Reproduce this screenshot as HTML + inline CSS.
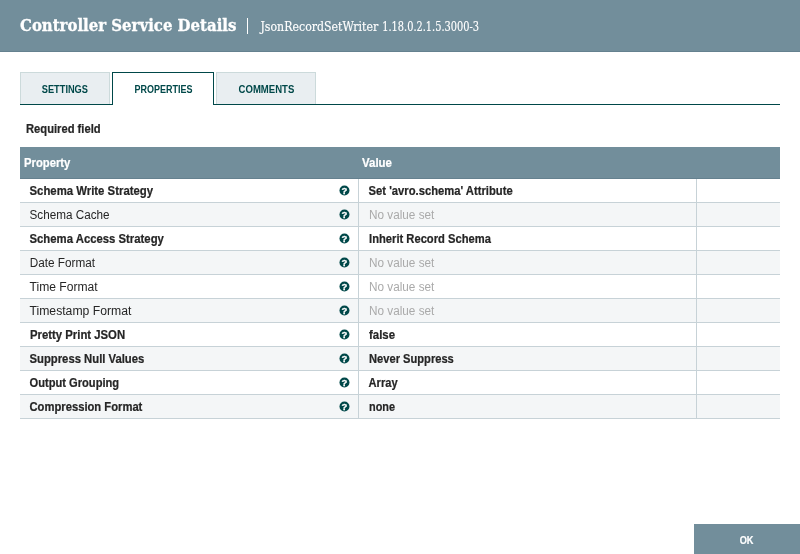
<!DOCTYPE html>
<html lang="en"><head><meta charset="utf-8"><title>Controller Service Details</title>
<style>
html,body{margin:0;padding:0;background:#fff}
body{width:800px;height:554px;overflow:hidden;position:relative;font-family:"Liberation Sans", Arial, sans-serif;color:#262626}
.dialog{position:absolute;left:0;top:0;width:800px;height:554px;overflow:hidden;background:#fff;will-change:transform}
.t{position:absolute;left:0;top:0;white-space:nowrap;line-height:20px;height:20px;transform-origin:0 0;font-weight:normal;font-family:"Liberation Sans", Arial, sans-serif}
.t.b{font-weight:bold;-webkit-text-stroke:.22px}
.t.tl{-webkit-text-stroke:0}
.t.sl{font-family:"DejaVu Serif", "Liberation Serif", serif;-webkit-text-stroke:.15px #fff}
.t.sl.b{-webkit-text-stroke:.35px #fff}
.t.unset{color:#aaaaaa}
.dialog-header{position:absolute;left:0;top:0;width:800px;height:52px;background:#728e9b;box-sizing:border-box;border-bottom:1px solid #65818f;color:#fff}
.sep{position:absolute;left:247px;top:18px;width:1px;height:16px;background:#fff}
.tab{position:absolute;top:72px;height:32px;box-sizing:border-box;border:1px solid #ccdadb;border-bottom:none;background:#e9eef1;color:#004849}
.tab.selected{background:#fff;border-color:#004849;height:33px}
.tabline{position:absolute;top:104px;height:1px;background:#004849}
.grid-header{position:absolute;left:20px;top:147px;width:760px;height:32px;background:#728e9b;box-sizing:border-box;border-bottom:1px solid #65818f;color:#fff}
.row{position:absolute;left:20px;width:760px;height:24px;box-sizing:border-box;border-bottom:1px solid #c7d2d7;background:#fff}
.row.odd{background:#f4f6f7}
.cell{position:absolute;top:0;height:23px;box-sizing:border-box;border-right:1px solid #c7d2d7}
.c1{left:0;width:339px}.c2{left:339px;width:338px}
.help{position:absolute;left:318px;top:4px;width:14px;height:14px;overflow:visible}
.help text{font:bold 9.5px "Liberation Sans", Arial, sans-serif;fill:#fff;stroke:#fff;stroke-width:.3px}
.button{position:absolute;left:694px;top:524px;width:106px;height:30px;background:#728e9b;color:#fff}
</style></head><body><div class="dialog">
<div class="dialog-header"><span class="t sl b" style="font-size:17.5px;transform:translate(20.00px,15.00px) scaleX(0.8532)">Controller Service Details</span><div class="sep"></div><span class="t sl" style="font-size:12px;transform:translate(260.43px,17.00px) scaleX(0.9163)">JsonRecordSetWriter</span><span class="t sl" style="font-size:12px;transform:translate(382.18px,17.00px) scaleX(0.8176)">1.18.0.2.1.5.3000-3</span></div>
<div class="tab" style="left:20px;width:90px"><span class="t b tl" style="font-size:10.3px;transform:translate(20.75px,6.50px) scaleX(0.8979)">SETTINGS</span></div>
<div class="tab selected" style="left:112px;width:102px"><span class="t b tl" style="font-size:10.3px;transform:translate(21.60px,6.50px) scaleX(0.8721)">PROPERTIES</span></div>
<div class="tab" style="left:216px;width:100px"><span class="t b tl" style="font-size:10.3px;transform:translate(21.60px,6.50px) scaleX(0.9270)">COMMENTS</span></div>
<div class="tabline" style="left:20px;width:93px"></div><div class="tabline" style="left:213px;width:567px"></div>
<span class="t b" style="font-size:12.5px;transform:translate(26.00px,119.00px) scaleX(0.8947)">Required field</span>
<div class="grid-header"><span class="t b" style="font-size:12.5px;transform:translate(4.00px,6.00px) scaleX(0.9018)">Property</span><span class="t b" style="font-size:12.5px;transform:translate(342.00px,6.00px) scaleX(0.9172)">Value</span></div>
<div class="row" style="top:179px"><div class="cell c1"><span class="t b" style="font-size:12.5px;transform:translate(9.50px,2.00px) scaleX(0.9090)">Schema Write Strategy</span><svg class="help" viewBox="0 0 14 14"><circle cx="6.45" cy="7.5" r="5" fill="#004849"/><text x="6.5" y="10.8" text-anchor="middle">?</text></svg></div><div class="cell c2"><span class="t b" style="font-size:12.5px;transform:translate(9.55px,2.00px) scaleX(0.8984)">Set 'avro.schema' Attribute</span></div></div>
<div class="row odd" style="top:203px"><div class="cell c1"><span class="t" style="font-size:12.5px;transform:translate(9.50px,2.00px) scaleX(0.9367)">Schema Cache</span><svg class="help" viewBox="0 0 14 14"><circle cx="6.45" cy="7.5" r="5" fill="#004849"/><text x="6.5" y="10.8" text-anchor="middle">?</text></svg></div><div class="cell c2"><span class="t unset" style="font-size:12.5px;transform:translate(10.01px,2.00px) scaleX(0.9404)">No value set</span></div></div>
<div class="row" style="top:227px"><div class="cell c1"><span class="t b" style="font-size:12.5px;transform:translate(9.50px,2.00px) scaleX(0.9066)">Schema Access Strategy</span><svg class="help" viewBox="0 0 14 14"><circle cx="6.45" cy="7.5" r="5" fill="#004849"/><text x="6.5" y="10.8" text-anchor="middle">?</text></svg></div><div class="cell c2"><span class="t b" style="font-size:12.5px;transform:translate(10.05px,2.00px) scaleX(0.8950)">Inherit Record Schema</span></div></div>
<div class="row odd" style="top:251px"><div class="cell c1"><span class="t" style="font-size:12.5px;transform:translate(9.76px,2.00px) scaleX(0.9407)">Date Format</span><svg class="help" viewBox="0 0 14 14"><circle cx="6.45" cy="7.5" r="5" fill="#004849"/><text x="6.5" y="10.8" text-anchor="middle">?</text></svg></div><div class="cell c2"><span class="t unset" style="font-size:12.5px;transform:translate(10.01px,2.00px) scaleX(0.9404)">No value set</span></div></div>
<div class="row" style="top:275px"><div class="cell c1"><span class="t" style="font-size:12.5px;transform:translate(9.50px,2.00px) scaleX(0.9676)">Time Format</span><svg class="help" viewBox="0 0 14 14"><circle cx="6.45" cy="7.5" r="5" fill="#004849"/><text x="6.5" y="10.8" text-anchor="middle">?</text></svg></div><div class="cell c2"><span class="t unset" style="font-size:12.5px;transform:translate(10.01px,2.00px) scaleX(0.9404)">No value set</span></div></div>
<div class="row odd" style="top:299px"><div class="cell c1"><span class="t" style="font-size:12.5px;transform:translate(9.50px,2.00px) scaleX(0.9753)">Timestamp Format</span><svg class="help" viewBox="0 0 14 14"><circle cx="6.45" cy="7.5" r="5" fill="#004849"/><text x="6.5" y="10.8" text-anchor="middle">?</text></svg></div><div class="cell c2"><span class="t unset" style="font-size:12.5px;transform:translate(10.01px,2.00px) scaleX(0.9404)">No value set</span></div></div>
<div class="row" style="top:323px"><div class="cell c1"><span class="t b" style="font-size:12.5px;transform:translate(10.00px,2.00px) scaleX(0.9069)">Pretty Print JSON</span><svg class="help" viewBox="0 0 14 14"><circle cx="6.45" cy="7.5" r="5" fill="#004849"/><text x="6.5" y="10.8" text-anchor="middle">?</text></svg></div><div class="cell c2"><span class="t b" style="font-size:12.5px;transform:translate(10.05px,2.00px) scaleX(0.9128)">false</span></div></div>
<div class="row odd" style="top:347px"><div class="cell c1"><span class="t b" style="font-size:12.5px;transform:translate(9.50px,2.00px) scaleX(0.9031)">Suppress Null Values</span><svg class="help" viewBox="0 0 14 14"><circle cx="6.45" cy="7.5" r="5" fill="#004849"/><text x="6.5" y="10.8" text-anchor="middle">?</text></svg></div><div class="cell c2"><span class="t b" style="font-size:12.5px;transform:translate(10.05px,2.00px) scaleX(0.8905)">Never Suppress</span></div></div>
<div class="row" style="top:371px"><div class="cell c1"><span class="t b" style="font-size:12.5px;transform:translate(9.50px,2.00px) scaleX(0.8907)">Output Grouping</span><svg class="help" viewBox="0 0 14 14"><circle cx="6.45" cy="7.5" r="5" fill="#004849"/><text x="6.5" y="10.8" text-anchor="middle">?</text></svg></div><div class="cell c2"><span class="t b" style="font-size:12.5px;transform:translate(9.55px,2.00px) scaleX(0.8882)">Array</span></div></div>
<div class="row odd" style="top:395px"><div class="cell c1"><span class="t b" style="font-size:12.5px;transform:translate(9.50px,2.00px) scaleX(0.8977)">Compression Format</span><svg class="help" viewBox="0 0 14 14"><circle cx="6.45" cy="7.5" r="5" fill="#004849"/><text x="6.5" y="10.8" text-anchor="middle">?</text></svg></div><div class="cell c2"><span class="t b" style="font-size:12.5px;transform:translate(10.05px,2.00px) scaleX(0.8710)">none</span></div></div>
<div class="button"><span class="t b" style="font-size:11px;transform:translate(45.70px,6.00px) scaleX(0.8335)">OK</span></div>
</div></body></html>
